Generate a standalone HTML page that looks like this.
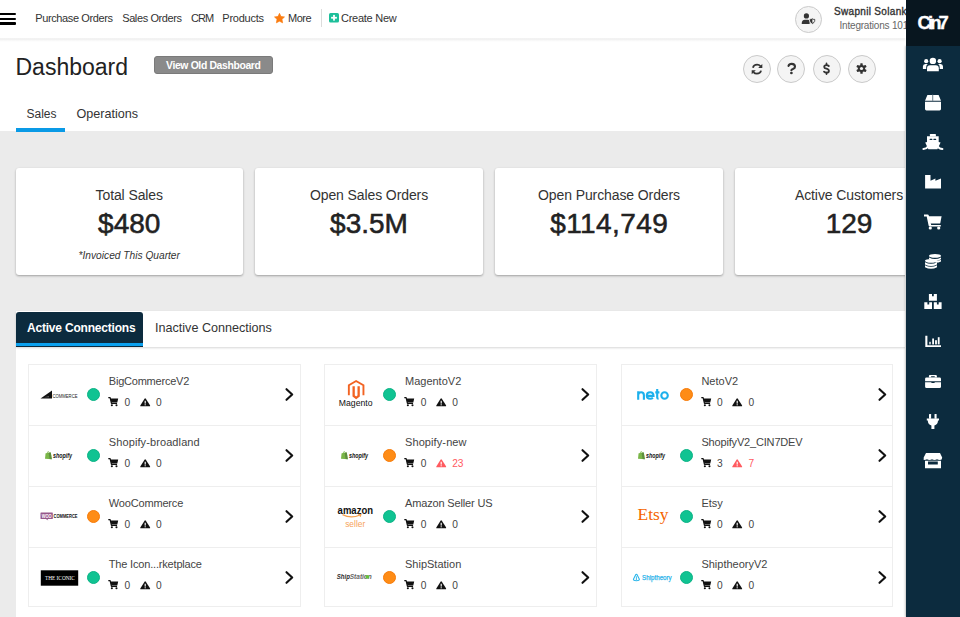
<!DOCTYPE html>
<html><head><meta charset="utf-8"><style>
*{box-sizing:border-box;margin:0;padding:0}
html,body{width:960px;height:617px;overflow:hidden;background:#ebebeb;font-family:"Liberation Sans",sans-serif;color:#333}
.a{position:absolute;white-space:nowrap;line-height:1}
svg{position:absolute;overflow:visible}
#top{position:absolute;left:0;top:0;width:906px;height:38px;background:#fff;box-shadow:0 1px 1px rgba(0,0,0,.07)}
#head{position:absolute;left:0;top:38px;width:906px;height:93px;background:#fff}
#side{position:absolute;left:906px;top:0;width:54px;height:617px;background:#0c2b3e}
#sidehd{position:absolute;left:0;top:0;width:54px;height:46px;background:#08161f}
.nav{font-size:11px;color:#333;top:13px}
.circ{position:absolute;width:28px;height:28px;border-radius:50%;background:#f4f4f4;border:1.4px solid #cacaca}
.card{position:absolute;top:168px;width:228px;height:107px;background:#fff;border-radius:3px;box-shadow:0 1px 3px rgba(0,0,0,.12),0 1px 2px rgba(0,0,0,.22)}
.ct{position:absolute;left:0;width:100%;text-align:center;line-height:1;white-space:nowrap}
.t1{top:19.8px;font-size:14px;color:#333;letter-spacing:-0.1px}
.t2{top:42px;font-size:28px;font-weight:400;color:#222;-webkit-text-stroke:0.55px #222}
.t3{top:83px;font-size:10.2px;font-style:italic;color:#333}
#panel{position:absolute;left:16px;top:311px;width:890px;height:306px;background:#fff}
#ptabs{position:absolute;left:0;top:0;width:890px;height:36px;background:#fff;box-shadow:0 1px 2px rgba(0,0,0,.16)}
.cc{position:absolute;width:272.8px;border:1px solid #eeeeee;background:#fff}
.nm{position:absolute;left:79.8px;top:11.3px;font-size:11px;color:#444;line-height:1;white-space:nowrap}
.cnt{position:absolute;top:32.6px;font-size:10.2px;color:#444;line-height:1}
.dot{position:absolute;left:58.3px;top:23.3px;width:13px;height:13px;border-radius:50%}
.g{background:#10c392;border:1px solid #0bb386}
.o{background:#fe8c16;border:1px solid #f77b08}
</style></head><body>
<div id="top">
  <div class="a" style="left:0;top:13.4px;width:16.4px;height:2.1px;background:#000;border-radius:0 1px 1px 0"></div>
  <div class="a" style="left:0;top:18.1px;width:16.4px;height:2.1px;background:#000;border-radius:0 1px 1px 0"></div>
  <div class="a" style="left:0;top:22.4px;width:16.4px;height:2.4px;background:#000;border-radius:0 1px 1px 0"></div>
  <div class="a nav" style="left:35.2px;letter-spacing:-0.38px">Purchase Orders</div>
  <div class="a nav" style="left:122.2px;letter-spacing:-0.39px">Sales Orders</div>
  <div class="a nav" style="left:191px;letter-spacing:-0.9px">CRM</div>
  <div class="a nav" style="left:222.3px;letter-spacing:-0.24px">Products</div>
  <svg style="left:274px;top:12.7px" width="11" height="10.5" viewBox="0 0 24 23"><path d="M12 0.8 L15.3 7.6 L22.9 8.6 L17.4 13.9 L18.8 21.5 L12 17.8 L5.2 21.5 L6.6 13.9 L1.1 8.6 L8.7 7.6 Z" fill="#fb7c10" stroke="#fb7c10" stroke-width="1.5" stroke-linejoin="round"/></svg>
  <div class="a nav" style="left:288px;letter-spacing:-0.5px">More</div>
  <div class="a" style="left:321px;top:9.2px;width:1px;height:18.2px;background:#dcdcdc"></div>
  <svg style="left:329px;top:13px" width="10" height="9.5" viewBox="0 0 10 9.5"><rect x="0" y="0" width="10" height="9.5" rx="1.6" fill="#1dbf9a"/><rect x="4.1" y="1.9" width="1.8" height="5.7" fill="#fff"/><rect x="2.1" y="3.85" width="5.8" height="1.8" fill="#fff"/></svg>
  <div class="a nav" style="left:341px;letter-spacing:-0.26px">Create New</div>
  <div class="a" style="left:795px;top:5.5px;width:27px;height:27px;border-radius:50%;background:#f4f4f4;border:1.4px solid #cacaca"></div>
  <svg style="left:801px;top:13px" width="16" height="12" viewBox="0 0 16 12">
    <circle cx="5.4" cy="2.9" r="2.6" fill="#333"/>
    <path d="M0.7 11 Q0.7 6.8 4 6.8 H6.8 Q8.4 6.8 8.6 7.6 V11 Z" fill="#333"/>
    <path d="M11.4 5.1 L14.6 6.2 Q14.6 9.8 11.4 11.2 Q8.2 9.8 8.2 6.2 Z" fill="#333" stroke="#f4f4f4" stroke-width="0.8"/>
    <path d="M11.4 6.3 L13.4 7 Q13.3 9.2 11.4 10.1 Z" fill="#f4f4f4"/>
  </svg>
  <div class="a" style="left:834px;top:6.5px;font-size:10px;font-weight:400;color:#333;-webkit-text-stroke:0.35px #333;letter-spacing:0.32px">Swapnil Solanki</div>
  <div class="a" style="left:839.5px;top:21.2px;font-size:10px;color:#666;letter-spacing:-0.2px">Integrations 101</div>
</div>
<div id="head">
  <div class="a" style="left:0;top:-0.5px;width:906px;height:4px;background:linear-gradient(to bottom, rgba(0,0,0,.045), rgba(0,0,0,.06) 30%, rgba(0,0,0,.02) 70%, rgba(0,0,0,0))"></div>
  <div class="a" style="left:15.5px;top:18.3px;font-size:23px;color:#222">Dashboard</div>
  <div class="a" style="left:154px;top:17.5px;width:119px;height:18.3px;background:#8a8a8a;border:1px solid #7a7a7a;border-radius:3px"></div>
  <div class="a" style="left:166px;top:22.5px;font-size:10.4px;font-weight:700;color:#fff;letter-spacing:-0.35px">View Old Dashboard</div>
  <div class="a" style="left:26.5px;top:69.9px;font-size:12px;color:#333">Sales</div>
  <div class="a" style="left:76.5px;top:69.9px;font-size:12.6px;color:#333">Operations</div>
  <div class="a" style="left:15.5px;top:90px;width:49.5px;height:3.5px;background:#0a9ae6"></div>
</div>
<div class="circ" style="left:742.5px;top:54.8px"></div>
<div class="circ" style="left:777px;top:54.8px"></div>
<div class="circ" style="left:812.5px;top:54.8px"></div>
<div class="circ" style="left:847.5px;top:54.8px"></div>
<svg style="left:750.5px;top:62.6px" width="12" height="12" viewBox="0 0 12 12">
  <path d="M1.9 4.7 Q2.7 1.6 6.1 1.6 Q8.2 1.6 9.6 3.2" fill="none" stroke="#333" stroke-width="1.7"/>
  <path d="M11.3 0.9 V5 H7.2 Z" fill="#333"/>
  <path d="M10.1 7.6 Q9.3 10.7 5.9 10.7 Q3.8 10.7 2.4 9.1" fill="none" stroke="#333" stroke-width="1.7"/>
  <path d="M0.7 11.3 V7.3 H4.8 Z" fill="#333"/>
</svg>
<svg style="left:786px;top:62px" width="12" height="14" viewBox="0 0 12 14"><path d="M2.5 3.9 Q3.2 1.9 5.6 1.9 Q9 1.9 9 4.7 Q9 6.2 6.9 7 Q5.4 7.5 5.4 8.2" fill="none" stroke="#333" stroke-width="2.1" stroke-linecap="round"/><circle cx="5.4" cy="11" r="1.35" fill="#333"/></svg>
<svg style="left:820px;top:62px" width="12" height="14" viewBox="0 0 12 14"><path d="M6.5 1.4 V3 M6.5 10.6 V12.1" stroke="#333" stroke-width="1.7" stroke-linecap="round"/><path d="M8.8 4 Q7.9 3.1 6.4 3.1 Q4.2 3.1 4.2 4.9 Q4.2 6.2 6.4 6.7 Q8.9 7.3 8.9 8.9 Q8.9 10.6 6.5 10.6 Q5 10.6 4 9.6" fill="none" stroke="#333" stroke-width="1.8" stroke-linecap="round"/></svg>
<svg style="left:856px;top:63.3px" width="11" height="11" viewBox="0 0 11 11">
  <g fill="#333"><circle cx="5.5" cy="5.5" r="3.6"/>
  <rect x="4.3" y="0.2" width="2.4" height="10.6" rx="0.6"/>
  <rect x="4.3" y="0.2" width="2.4" height="10.6" rx="0.6" transform="rotate(60 5.5 5.5)"/>
  <rect x="4.3" y="0.2" width="2.4" height="10.6" rx="0.6" transform="rotate(120 5.5 5.5)"/></g>
  <circle cx="5.5" cy="5.5" r="1.6" fill="#f4f4f4"/>
</svg>

<div class="card" style="left:15.5px;width:227.5px">
  <div class="ct t1">Total Sales</div>
  <div class="ct t2">$480</div>
  <div class="ct t3">*Invoiced This Quarter</div>
</div>
<div class="card" style="left:255px">
  <div class="ct t1">Open Sales Orders</div>
  <div class="ct t2">$3.5M</div>
</div>
<div class="card" style="left:495px">
  <div class="ct t1">Open Purchase Orders</div>
  <div class="ct t2" style="letter-spacing:0.4px;text-indent:0.4px">$114,749</div>
</div>
<div class="card" style="left:735px">
  <div class="ct t1">Active Customers</div>
  <div class="ct t2">129</div>
</div>

<div id="panel">
  <div id="ptabs">
    <div class="a" style="left:0;top:1px;width:127px;height:35px;background:#0c2b3e;border-radius:3px 3px 0 0"></div>
    <div class="a" style="left:0;top:32px;width:127px;height:3px;background:#0aa0ee"></div>
    <div class="a" style="left:11px;top:11px;font-size:12px;font-weight:700;color:#fff;letter-spacing:-0.2px">Active Connections</div>
    <div class="a" style="left:139px;top:11px;font-size:12.6px;color:#333">Inactive Connections</div>
  </div>
</div>
<div class="cc" style="left:28px;top:364px;height:62px"><div style="position:absolute;left:-1px;top:0"><svg style="left:12px;top:25px" width="40" height="10" viewBox="0 0 40 10"><path d="M0.5 8.6 L12 0.5 L12 8.6 Z" fill="#111"/><path d="M4 7.2 L9 7.2 L9 6.2 Z" fill="#777"/><text x="12.5" y="7.9" font-family="Liberation Sans" font-size="4.6" fill="#222" textLength="25" lengthAdjust="spacingAndGlyphs">COMMERCE</text></svg></div><div class="dot g"></div><div class="nm" style="letter-spacing:-0.22px">BigCommerceV2</div><svg style="left:79.3px;top:31.9px" width="10.6" height="9.7" viewBox="0 0 11 10"><path d="M0.3 0.6 H2.2 L3.6 6.6 H9.4" fill="none" stroke="#111" stroke-width="1.3" stroke-linejoin="round"/><path d="M2.6 1.6 H10.6 L9.6 5.6 H3.4 Z" fill="#111"/><circle cx="4" cy="8.6" r="1.1" fill="#111"/><circle cx="8.8" cy="8.6" r="1.1" fill="#111"/></svg><div class="cnt" style="left:95.5px">0</div><svg style="left:110.8px;top:32.6px" width="10.4" height="8.6" viewBox="0 0 11 10" preserveAspectRatio="none"><path d="M5.5 0.4 Q5.9 0.4 6.2 0.9 L10.7 8.6 Q11 9.6 10 9.6 H1 Q0 9.6 0.3 8.6 L4.8 0.9 Q5.1 0.4 5.5 0.4 Z" fill="#111"/><rect x="4.9" y="3.2" width="1.2" height="3.3" fill="#fff"/><rect x="4.9" y="7.3" width="1.2" height="1.2" fill="#fff"/></svg><div class="cnt" style="left:127px;color:#444">0</div><svg style="left:256px;top:23.2px" width="9" height="13" viewBox="0 0 9 13"><path d="M1.5 1.2 L7.2 6.5 L1.5 11.8" fill="none" stroke="#111" stroke-width="2.1" stroke-linecap="round" stroke-linejoin="round"/></svg></div>
<div class="cc" style="left:28px;top:425px;height:62px"><div style="position:absolute;left:-1px;top:0"><svg style="left:17px;top:25px" width="30" height="10" viewBox="0 0 30 10"><path d="M0.6 2.3 L5.8 1.6 L6.8 8.3 L0 7.7 Z" fill="#7ab648"/><path d="M3.6 1.8 L5.8 1.6 L6.8 8.3 L4.6 8.1 Z" fill="#5e8e3e"/><path d="M2.2 2.2 Q2.5 0.2 3.6 0.6 Q4.3 1 4.2 2" fill="none" stroke="#7ab648" stroke-width="0.7"/><text x="8" y="7" font-family="Liberation Sans" font-weight="700" font-style="italic" font-size="7" fill="#111" textLength="19" lengthAdjust="spacingAndGlyphs">shopify</text></svg></div><div class="dot g"></div><div class="nm" style="letter-spacing:0.1px">Shopify-broadland</div><svg style="left:79.3px;top:31.9px" width="10.6" height="9.7" viewBox="0 0 11 10"><path d="M0.3 0.6 H2.2 L3.6 6.6 H9.4" fill="none" stroke="#111" stroke-width="1.3" stroke-linejoin="round"/><path d="M2.6 1.6 H10.6 L9.6 5.6 H3.4 Z" fill="#111"/><circle cx="4" cy="8.6" r="1.1" fill="#111"/><circle cx="8.8" cy="8.6" r="1.1" fill="#111"/></svg><div class="cnt" style="left:95.5px">0</div><svg style="left:110.8px;top:32.6px" width="10.4" height="8.6" viewBox="0 0 11 10" preserveAspectRatio="none"><path d="M5.5 0.4 Q5.9 0.4 6.2 0.9 L10.7 8.6 Q11 9.6 10 9.6 H1 Q0 9.6 0.3 8.6 L4.8 0.9 Q5.1 0.4 5.5 0.4 Z" fill="#111"/><rect x="4.9" y="3.2" width="1.2" height="3.3" fill="#fff"/><rect x="4.9" y="7.3" width="1.2" height="1.2" fill="#fff"/></svg><div class="cnt" style="left:127px;color:#444">0</div><svg style="left:256px;top:23.2px" width="9" height="13" viewBox="0 0 9 13"><path d="M1.5 1.2 L7.2 6.5 L1.5 11.8" fill="none" stroke="#111" stroke-width="2.1" stroke-linecap="round" stroke-linejoin="round"/></svg></div>
<div class="cc" style="left:28px;top:486px;height:62px"><div style="position:absolute;left:-1px;top:0"><svg style="left:12px;top:25px" width="40" height="10" viewBox="0 0 40 10"><path d="M1 0.5 H12.3 Q12.8 0.5 12.8 1 V6.6 Q12.8 7.1 12.3 7.1 H7.5 L8.3 8.6 L5.8 7.1 H1 Q0.5 7.1 0.5 6.6 V1 Q0.5 0.5 1 0.5 Z" fill="#96588a"/><text x="1.7" y="5.9" font-family="Liberation Sans" font-weight="700" font-size="5.6" fill="#fff" textLength="10" lengthAdjust="spacingAndGlyphs">WOO</text><text x="13.5" y="6.3" font-family="Liberation Sans" font-weight="700" font-size="5" fill="#111" textLength="24" lengthAdjust="spacingAndGlyphs">COMMERCE</text></svg></div><div class="dot o"></div><div class="nm" style="letter-spacing:-0.17px">WooCommerce</div><svg style="left:79.3px;top:31.9px" width="10.6" height="9.7" viewBox="0 0 11 10"><path d="M0.3 0.6 H2.2 L3.6 6.6 H9.4" fill="none" stroke="#111" stroke-width="1.3" stroke-linejoin="round"/><path d="M2.6 1.6 H10.6 L9.6 5.6 H3.4 Z" fill="#111"/><circle cx="4" cy="8.6" r="1.1" fill="#111"/><circle cx="8.8" cy="8.6" r="1.1" fill="#111"/></svg><div class="cnt" style="left:95.5px">0</div><svg style="left:110.8px;top:32.6px" width="10.4" height="8.6" viewBox="0 0 11 10" preserveAspectRatio="none"><path d="M5.5 0.4 Q5.9 0.4 6.2 0.9 L10.7 8.6 Q11 9.6 10 9.6 H1 Q0 9.6 0.3 8.6 L4.8 0.9 Q5.1 0.4 5.5 0.4 Z" fill="#111"/><rect x="4.9" y="3.2" width="1.2" height="3.3" fill="#fff"/><rect x="4.9" y="7.3" width="1.2" height="1.2" fill="#fff"/></svg><div class="cnt" style="left:127px;color:#444">0</div><svg style="left:256px;top:23.2px" width="9" height="13" viewBox="0 0 9 13"><path d="M1.5 1.2 L7.2 6.5 L1.5 11.8" fill="none" stroke="#111" stroke-width="2.1" stroke-linecap="round" stroke-linejoin="round"/></svg></div>
<div class="cc" style="left:28px;top:547px;height:60px"><div style="position:absolute;left:-1px;top:0"><svg style="left:12px;top:22px" width="38" height="16" viewBox="0 0 38 16"><rect x="0.8" y="0.3" width="37.4" height="15.4" fill="#000"/><text x="4.9" y="10" font-family="Liberation Serif" font-size="5.4" fill="#fff" textLength="30" lengthAdjust="spacingAndGlyphs">THE ICONIC</text></svg></div><div class="dot g"></div><div class="nm" style="letter-spacing:-0.18px">The Icon...rketplace</div><svg style="left:79.3px;top:31.9px" width="10.6" height="9.7" viewBox="0 0 11 10"><path d="M0.3 0.6 H2.2 L3.6 6.6 H9.4" fill="none" stroke="#111" stroke-width="1.3" stroke-linejoin="round"/><path d="M2.6 1.6 H10.6 L9.6 5.6 H3.4 Z" fill="#111"/><circle cx="4" cy="8.6" r="1.1" fill="#111"/><circle cx="8.8" cy="8.6" r="1.1" fill="#111"/></svg><div class="cnt" style="left:95.5px">0</div><svg style="left:110.8px;top:32.6px" width="10.4" height="8.6" viewBox="0 0 11 10" preserveAspectRatio="none"><path d="M5.5 0.4 Q5.9 0.4 6.2 0.9 L10.7 8.6 Q11 9.6 10 9.6 H1 Q0 9.6 0.3 8.6 L4.8 0.9 Q5.1 0.4 5.5 0.4 Z" fill="#111"/><rect x="4.9" y="3.2" width="1.2" height="3.3" fill="#fff"/><rect x="4.9" y="7.3" width="1.2" height="1.2" fill="#fff"/></svg><div class="cnt" style="left:127px;color:#444">0</div><svg style="left:256px;top:23.2px" width="9" height="13" viewBox="0 0 9 13"><path d="M1.5 1.2 L7.2 6.5 L1.5 11.8" fill="none" stroke="#111" stroke-width="2.1" stroke-linecap="round" stroke-linejoin="round"/></svg></div>
<div class="cc" style="left:324.2px;top:364px;height:62px"><div style="position:absolute;left:-1px;top:0"><svg style="left:14px;top:14px" width="36" height="30" viewBox="0 0 36 30"><path d="M10.85 16.3 V6.2 L18.1 2 L25.45 6.2 V16.3" fill="none" stroke="#f26322" stroke-width="1.9"/><path d="M15.65 7.3 V17 L18.15 18.9 L20.65 17 V7.3" fill="none" stroke="#f26322" stroke-width="2.3"/><text x="0.8" y="27" font-family="Liberation Sans" font-size="9.3" fill="#111" textLength="33.7" lengthAdjust="spacingAndGlyphs">Magento</text></svg></div><div class="dot g"></div><div class="nm" style="letter-spacing:0px">MagentoV2</div><svg style="left:79.3px;top:31.9px" width="10.6" height="9.7" viewBox="0 0 11 10"><path d="M0.3 0.6 H2.2 L3.6 6.6 H9.4" fill="none" stroke="#111" stroke-width="1.3" stroke-linejoin="round"/><path d="M2.6 1.6 H10.6 L9.6 5.6 H3.4 Z" fill="#111"/><circle cx="4" cy="8.6" r="1.1" fill="#111"/><circle cx="8.8" cy="8.6" r="1.1" fill="#111"/></svg><div class="cnt" style="left:95.5px">0</div><svg style="left:110.8px;top:32.6px" width="10.4" height="8.6" viewBox="0 0 11 10" preserveAspectRatio="none"><path d="M5.5 0.4 Q5.9 0.4 6.2 0.9 L10.7 8.6 Q11 9.6 10 9.6 H1 Q0 9.6 0.3 8.6 L4.8 0.9 Q5.1 0.4 5.5 0.4 Z" fill="#111"/><rect x="4.9" y="3.2" width="1.2" height="3.3" fill="#fff"/><rect x="4.9" y="7.3" width="1.2" height="1.2" fill="#fff"/></svg><div class="cnt" style="left:127px;color:#444">0</div><svg style="left:256px;top:23.2px" width="9" height="13" viewBox="0 0 9 13"><path d="M1.5 1.2 L7.2 6.5 L1.5 11.8" fill="none" stroke="#111" stroke-width="2.1" stroke-linecap="round" stroke-linejoin="round"/></svg></div>
<div class="cc" style="left:324.2px;top:425px;height:62px"><div style="position:absolute;left:-1px;top:0"><svg style="left:17px;top:25px" width="30" height="10" viewBox="0 0 30 10"><path d="M0.6 2.3 L5.8 1.6 L6.8 8.3 L0 7.7 Z" fill="#7ab648"/><path d="M3.6 1.8 L5.8 1.6 L6.8 8.3 L4.6 8.1 Z" fill="#5e8e3e"/><path d="M2.2 2.2 Q2.5 0.2 3.6 0.6 Q4.3 1 4.2 2" fill="none" stroke="#7ab648" stroke-width="0.7"/><text x="8" y="7" font-family="Liberation Sans" font-weight="700" font-style="italic" font-size="7" fill="#111" textLength="19" lengthAdjust="spacingAndGlyphs">shopify</text></svg></div><div class="dot o"></div><div class="nm" style="letter-spacing:0.1px">Shopify-new</div><svg style="left:79.3px;top:31.9px" width="10.6" height="9.7" viewBox="0 0 11 10"><path d="M0.3 0.6 H2.2 L3.6 6.6 H9.4" fill="none" stroke="#111" stroke-width="1.3" stroke-linejoin="round"/><path d="M2.6 1.6 H10.6 L9.6 5.6 H3.4 Z" fill="#111"/><circle cx="4" cy="8.6" r="1.1" fill="#111"/><circle cx="8.8" cy="8.6" r="1.1" fill="#111"/></svg><div class="cnt" style="left:95.5px">0</div><svg style="left:110.8px;top:32.6px" width="10.4" height="8.6" viewBox="0 0 11 10" preserveAspectRatio="none"><path d="M5.5 0.4 Q5.9 0.4 6.2 0.9 L10.7 8.6 Q11 9.6 10 9.6 H1 Q0 9.6 0.3 8.6 L4.8 0.9 Q5.1 0.4 5.5 0.4 Z" fill="#ff5a5f"/><rect x="4.9" y="3.2" width="1.2" height="3.3" fill="#fff"/><rect x="4.9" y="7.3" width="1.2" height="1.2" fill="#fff"/></svg><div class="cnt" style="left:127px;color:#ff5a5f">23</div><svg style="left:256px;top:23.2px" width="9" height="13" viewBox="0 0 9 13"><path d="M1.5 1.2 L7.2 6.5 L1.5 11.8" fill="none" stroke="#111" stroke-width="2.1" stroke-linecap="round" stroke-linejoin="round"/></svg></div>
<div class="cc" style="left:324.2px;top:486px;height:62px"><div style="position:absolute;left:-1px;top:0"><svg style="left:13px;top:17px" width="38" height="28" viewBox="0 0 38 28"><text x="0.6" y="9.5" font-family="Liberation Sans" font-weight="700" font-size="11" fill="#111" textLength="35.5" lengthAdjust="spacingAndGlyphs">amazon</text><path d="M5.5 10.6 Q14 15 23 11" fill="none" stroke="#f6a04d" stroke-width="1.3"/><path d="M21.3 10.4 L23.9 10.6 L23.2 12.8" fill="none" stroke="#f6a04d" stroke-width="1.1"/><text x="8.2" y="22.8" font-family="Liberation Sans" font-size="8.2" fill="#f6a35a" textLength="20" lengthAdjust="spacingAndGlyphs">seller</text></svg></div><div class="dot g"></div><div class="nm" style="letter-spacing:-0.15px">Amazon Seller US</div><svg style="left:79.3px;top:31.9px" width="10.6" height="9.7" viewBox="0 0 11 10"><path d="M0.3 0.6 H2.2 L3.6 6.6 H9.4" fill="none" stroke="#111" stroke-width="1.3" stroke-linejoin="round"/><path d="M2.6 1.6 H10.6 L9.6 5.6 H3.4 Z" fill="#111"/><circle cx="4" cy="8.6" r="1.1" fill="#111"/><circle cx="8.8" cy="8.6" r="1.1" fill="#111"/></svg><div class="cnt" style="left:95.5px">0</div><svg style="left:110.8px;top:32.6px" width="10.4" height="8.6" viewBox="0 0 11 10" preserveAspectRatio="none"><path d="M5.5 0.4 Q5.9 0.4 6.2 0.9 L10.7 8.6 Q11 9.6 10 9.6 H1 Q0 9.6 0.3 8.6 L4.8 0.9 Q5.1 0.4 5.5 0.4 Z" fill="#111"/><rect x="4.9" y="3.2" width="1.2" height="3.3" fill="#fff"/><rect x="4.9" y="7.3" width="1.2" height="1.2" fill="#fff"/></svg><div class="cnt" style="left:127px;color:#444">0</div><svg style="left:256px;top:23.2px" width="9" height="13" viewBox="0 0 9 13"><path d="M1.5 1.2 L7.2 6.5 L1.5 11.8" fill="none" stroke="#111" stroke-width="2.1" stroke-linecap="round" stroke-linejoin="round"/></svg></div>
<div class="cc" style="left:324.2px;top:547px;height:60px"><div style="position:absolute;left:-1px;top:0"><svg style="left:12px;top:25px" width="40" height="10" viewBox="0 0 40 10"><text x="0.8" y="5.7" font-family="Liberation Sans" font-weight="700" font-style="italic" font-size="6.8" fill="#2a2a2a" textLength="13" lengthAdjust="spacingAndGlyphs">Ship</text><text x="13.8" y="5.7" font-family="Liberation Sans" font-weight="700" font-style="italic" font-size="6.8" fill="#666" textLength="22" lengthAdjust="spacingAndGlyphs">Station</text><circle cx="31.3" cy="3.8" r="1.9" fill="#67c23a"/></svg></div><div class="dot o"></div><div class="nm" style="letter-spacing:0px">ShipStation</div><svg style="left:79.3px;top:31.9px" width="10.6" height="9.7" viewBox="0 0 11 10"><path d="M0.3 0.6 H2.2 L3.6 6.6 H9.4" fill="none" stroke="#111" stroke-width="1.3" stroke-linejoin="round"/><path d="M2.6 1.6 H10.6 L9.6 5.6 H3.4 Z" fill="#111"/><circle cx="4" cy="8.6" r="1.1" fill="#111"/><circle cx="8.8" cy="8.6" r="1.1" fill="#111"/></svg><div class="cnt" style="left:95.5px">0</div><svg style="left:110.8px;top:32.6px" width="10.4" height="8.6" viewBox="0 0 11 10" preserveAspectRatio="none"><path d="M5.5 0.4 Q5.9 0.4 6.2 0.9 L10.7 8.6 Q11 9.6 10 9.6 H1 Q0 9.6 0.3 8.6 L4.8 0.9 Q5.1 0.4 5.5 0.4 Z" fill="#111"/><rect x="4.9" y="3.2" width="1.2" height="3.3" fill="#fff"/><rect x="4.9" y="7.3" width="1.2" height="1.2" fill="#fff"/></svg><div class="cnt" style="left:127px;color:#444">0</div><svg style="left:256px;top:23.2px" width="9" height="13" viewBox="0 0 9 13"><path d="M1.5 1.2 L7.2 6.5 L1.5 11.8" fill="none" stroke="#111" stroke-width="2.1" stroke-linecap="round" stroke-linejoin="round"/></svg></div>
<div class="cc" style="left:620.6px;top:364px;height:62px"><div style="position:absolute;left:-1px;top:0"><svg style="left:0.2px;top:-1px" width="60" height="61" viewBox="0 0 60 61"><g fill="none" stroke="#1cb0ec" stroke-width="2.1" stroke-linecap="butt"><path d="M17.2 27.2 V35.8 M17.2 31.2 Q17.2 28.3 20.1 28.3 Q22.9 28.3 22.9 31.2 V35.8"/><path d="M25.9 31.9 H32.5 Q32.5 28.2 29.2 28.2 Q25.8 28.2 25.8 31.5 Q25.8 34.8 29.2 34.8 Q30.9 34.8 31.9 33.8"/><path d="M36.2 25 V33.6 Q36.2 34.8 37.6 34.8 M34.3 28.4 H38.4"/><circle cx="43.55" cy="31.5" r="3.25"/></g></svg></div><div class="dot o"></div><div class="nm" style="letter-spacing:0px">NetoV2</div><svg style="left:79.3px;top:31.9px" width="10.6" height="9.7" viewBox="0 0 11 10"><path d="M0.3 0.6 H2.2 L3.6 6.6 H9.4" fill="none" stroke="#111" stroke-width="1.3" stroke-linejoin="round"/><path d="M2.6 1.6 H10.6 L9.6 5.6 H3.4 Z" fill="#111"/><circle cx="4" cy="8.6" r="1.1" fill="#111"/><circle cx="8.8" cy="8.6" r="1.1" fill="#111"/></svg><div class="cnt" style="left:95.5px">0</div><svg style="left:110.8px;top:32.6px" width="10.4" height="8.6" viewBox="0 0 11 10" preserveAspectRatio="none"><path d="M5.5 0.4 Q5.9 0.4 6.2 0.9 L10.7 8.6 Q11 9.6 10 9.6 H1 Q0 9.6 0.3 8.6 L4.8 0.9 Q5.1 0.4 5.5 0.4 Z" fill="#111"/><rect x="4.9" y="3.2" width="1.2" height="3.3" fill="#fff"/><rect x="4.9" y="7.3" width="1.2" height="1.2" fill="#fff"/></svg><div class="cnt" style="left:127px;color:#444">0</div><svg style="left:256px;top:23.2px" width="9" height="13" viewBox="0 0 9 13"><path d="M1.5 1.2 L7.2 6.5 L1.5 11.8" fill="none" stroke="#111" stroke-width="2.1" stroke-linecap="round" stroke-linejoin="round"/></svg></div>
<div class="cc" style="left:620.6px;top:425px;height:62px"><div style="position:absolute;left:-1px;top:0"><svg style="left:17px;top:25px" width="30" height="10" viewBox="0 0 30 10"><path d="M0.6 2.3 L5.8 1.6 L6.8 8.3 L0 7.7 Z" fill="#7ab648"/><path d="M3.6 1.8 L5.8 1.6 L6.8 8.3 L4.6 8.1 Z" fill="#5e8e3e"/><path d="M2.2 2.2 Q2.5 0.2 3.6 0.6 Q4.3 1 4.2 2" fill="none" stroke="#7ab648" stroke-width="0.7"/><text x="8" y="7" font-family="Liberation Sans" font-weight="700" font-style="italic" font-size="7" fill="#111" textLength="19" lengthAdjust="spacingAndGlyphs">shopify</text></svg></div><div class="dot g"></div><div class="nm" style="letter-spacing:-0.17px">ShopifyV2_CIN7DEV</div><svg style="left:79.3px;top:31.9px" width="10.6" height="9.7" viewBox="0 0 11 10"><path d="M0.3 0.6 H2.2 L3.6 6.6 H9.4" fill="none" stroke="#111" stroke-width="1.3" stroke-linejoin="round"/><path d="M2.6 1.6 H10.6 L9.6 5.6 H3.4 Z" fill="#111"/><circle cx="4" cy="8.6" r="1.1" fill="#111"/><circle cx="8.8" cy="8.6" r="1.1" fill="#111"/></svg><div class="cnt" style="left:95.5px">3</div><svg style="left:110.8px;top:32.6px" width="10.4" height="8.6" viewBox="0 0 11 10" preserveAspectRatio="none"><path d="M5.5 0.4 Q5.9 0.4 6.2 0.9 L10.7 8.6 Q11 9.6 10 9.6 H1 Q0 9.6 0.3 8.6 L4.8 0.9 Q5.1 0.4 5.5 0.4 Z" fill="#ff5a5f"/><rect x="4.9" y="3.2" width="1.2" height="3.3" fill="#fff"/><rect x="4.9" y="7.3" width="1.2" height="1.2" fill="#fff"/></svg><div class="cnt" style="left:127px;color:#ff5a5f">7</div><svg style="left:256px;top:23.2px" width="9" height="13" viewBox="0 0 9 13"><path d="M1.5 1.2 L7.2 6.5 L1.5 11.8" fill="none" stroke="#111" stroke-width="2.1" stroke-linecap="round" stroke-linejoin="round"/></svg></div>
<div class="cc" style="left:620.6px;top:486px;height:62px"><div style="position:absolute;left:-1px;top:0"><svg style="left:16px;top:18px" width="36" height="22" viewBox="0 0 36 22"><text x="0.5" y="15.3" font-family="Liberation Serif" font-size="17.5" fill="#f56400" textLength="31" lengthAdjust="spacingAndGlyphs">Etsy</text></svg></div><div class="dot g"></div><div class="nm" style="letter-spacing:0px">Etsy</div><svg style="left:79.3px;top:31.9px" width="10.6" height="9.7" viewBox="0 0 11 10"><path d="M0.3 0.6 H2.2 L3.6 6.6 H9.4" fill="none" stroke="#111" stroke-width="1.3" stroke-linejoin="round"/><path d="M2.6 1.6 H10.6 L9.6 5.6 H3.4 Z" fill="#111"/><circle cx="4" cy="8.6" r="1.1" fill="#111"/><circle cx="8.8" cy="8.6" r="1.1" fill="#111"/></svg><div class="cnt" style="left:95.5px">0</div><svg style="left:110.8px;top:32.6px" width="10.4" height="8.6" viewBox="0 0 11 10" preserveAspectRatio="none"><path d="M5.5 0.4 Q5.9 0.4 6.2 0.9 L10.7 8.6 Q11 9.6 10 9.6 H1 Q0 9.6 0.3 8.6 L4.8 0.9 Q5.1 0.4 5.5 0.4 Z" fill="#111"/><rect x="4.9" y="3.2" width="1.2" height="3.3" fill="#fff"/><rect x="4.9" y="7.3" width="1.2" height="1.2" fill="#fff"/></svg><div class="cnt" style="left:127px;color:#444">0</div><svg style="left:256px;top:23.2px" width="9" height="13" viewBox="0 0 9 13"><path d="M1.5 1.2 L7.2 6.5 L1.5 11.8" fill="none" stroke="#111" stroke-width="2.1" stroke-linecap="round" stroke-linejoin="round"/></svg></div>
<div class="cc" style="left:620.6px;top:547px;height:60px"><div style="position:absolute;left:-1px;top:0"><svg style="left:11px;top:24px" width="40" height="12" viewBox="0 0 40 12"><path d="M4.4 2.2 Q4.9 2.2 5.1 2.8 L7.4 7.3 Q7.4 8.7 4.4 8.7 Q1.4 8.7 1.4 7.3 L3.7 2.8 Q3.9 2.2 4.4 2.2 Z" fill="none" stroke="#29b5ea" stroke-width="1.1"/><path d="M4.4 4.3 V8" stroke="#29b5ea" stroke-width="0.9"/><text x="10.1" y="8" font-family="Liberation Sans" font-weight="400" font-size="7.4" fill="#25b2ea" stroke="#25b2ea" stroke-width="0.25" textLength="29.6" lengthAdjust="spacingAndGlyphs">Shiptheory</text></svg></div><div class="dot g"></div><div class="nm" style="letter-spacing:0px">ShiptheoryV2</div><svg style="left:79.3px;top:31.9px" width="10.6" height="9.7" viewBox="0 0 11 10"><path d="M0.3 0.6 H2.2 L3.6 6.6 H9.4" fill="none" stroke="#111" stroke-width="1.3" stroke-linejoin="round"/><path d="M2.6 1.6 H10.6 L9.6 5.6 H3.4 Z" fill="#111"/><circle cx="4" cy="8.6" r="1.1" fill="#111"/><circle cx="8.8" cy="8.6" r="1.1" fill="#111"/></svg><div class="cnt" style="left:95.5px">0</div><svg style="left:110.8px;top:32.6px" width="10.4" height="8.6" viewBox="0 0 11 10" preserveAspectRatio="none"><path d="M5.5 0.4 Q5.9 0.4 6.2 0.9 L10.7 8.6 Q11 9.6 10 9.6 H1 Q0 9.6 0.3 8.6 L4.8 0.9 Q5.1 0.4 5.5 0.4 Z" fill="#111"/><rect x="4.9" y="3.2" width="1.2" height="3.3" fill="#fff"/><rect x="4.9" y="7.3" width="1.2" height="1.2" fill="#fff"/></svg><div class="cnt" style="left:127px;color:#444">0</div><svg style="left:256px;top:23.2px" width="9" height="13" viewBox="0 0 9 13"><path d="M1.5 1.2 L7.2 6.5 L1.5 11.8" fill="none" stroke="#111" stroke-width="2.1" stroke-linecap="round" stroke-linejoin="round"/></svg></div>
<div class="a" style="left:904.6px;top:38px;width:1.4px;height:579px;background:#fafafa"></div>
<div class="a" style="left:906px;top:46px;width:1px;height:571px;box-shadow:-1px 0 2px rgba(0,0,0,.3)"></div>
<div id="side"><div id="sidehd"></div>
<div class="a" style="left:11.6px;top:13.6px;font-size:18.4px;font-weight:700;color:#fff;letter-spacing:-2.9px;-webkit-text-stroke:0.35px #fff">Cin7</div>
<svg style="left:0;top:0" width="54" height="617" viewBox="0 0 54 617">
 <g fill="#fff">
  <!-- users -->
  <circle cx="26.9" cy="60.9" r="3.2"/>
  <path d="M21 71.2 V68.3 Q21 65.3 24 65.3 H29.8 Q32.8 65.3 32.8 68.3 V71.2 Z"/>
  <circle cx="20.2" cy="61.2" r="2.1"/>
  <path d="M16.9 68.9 V66.5 Q16.9 64 19.3 64 H21.8 Q20.2 65.2 20.2 67 V68.9 Z"/>
  <circle cx="33.6" cy="61.2" r="2.1"/>
  <path d="M37 68.9 V66.5 Q37 64 34.6 64 H32.1 Q33.7 65.2 33.7 67 V68.9 Z"/>
  <!-- box -->
  <path d="M21.4 94.9 H32.6 L35 100.7 H19 Z"/>
  <path d="M19 101.8 H35 V109 Q35 110.4 33.6 110.4 H20.4 Q19 110.4 19 109 Z"/>
  <rect x="26.3" y="94.5" width="0.9" height="6.4" fill="#5a6f7c"/>
  <!-- ship -->
  <rect x="23.9" y="133.9" width="6" height="2.5" rx="0.5"/>
  <path d="M21 136.2 H32.7 V142 L34.6 142.6 L31.4 149.3 H22.4 L19.2 142.6 L21 142 Z"/>
  <rect x="23.6" y="138.7" width="2.8" height="1.2" rx="0.5" fill="#0c2b3e"/><rect x="27.4" y="138.7" width="2.8" height="1.2" rx="0.5" fill="#0c2b3e"/>
  <path d="M17.4 149 Q20.4 149 22.2 146.4" fill="none" stroke="#fff" stroke-width="2" stroke-linecap="round"/>
  <path d="M36.4 149 Q33.4 149 31.6 146.4" fill="none" stroke="#fff" stroke-width="2" stroke-linecap="round"/>
  <!-- industry -->
  <path d="M19.1 175.1 H24.5 V180.7 L29.4 178.6 V180.7 L35 178.6 V188.5 H19.1 Z"/>
  <!-- cart -->
  <path d="M18 214.6 H21.6 Q22.6 214.6 22.8 215.6 L25.2 224.9 H34.8 V226.5 H23.8 Q22.8 226.5 22.6 225.5 L20.7 216.5 H18 Z"/>
  <path d="M22.3 216.2 H35.6 L34.2 223.6 H24.3 Z"/>
  <circle cx="24.3" cy="228" r="1.6"/><circle cx="32.7" cy="228" r="1.6"/>
  <!-- coins -->
  <ellipse cx="29" cy="255.9" rx="6" ry="1.9"/>
  <path d="M23 257.4 Q29 260.6 35 257.4 V259.3 Q29 262.3 23 259.3 Z"/>
  <path d="M29.5 260.6 Q32.8 260.6 35 259.9 V261.5 Q32.8 262.8 29.5 262.8 Z"/>
  <ellipse cx="25" cy="260.8" rx="6" ry="1.9"/>
  <path d="M19 262.3 Q25 265.3 31 262.3 V264.4 Q25 267.4 19 264.4 Z"/>
  <path d="M19 265.2 Q25 268.2 31 265.2 V267.3 Q25 270.3 19 267.3 Z"/>
  <!-- pallet boxes -->
  <path d="M22.9 294 H26 V296.2 H27.8 V294 H30.9 V300.7 H22.9 Z"/>
  <path d="M18.3 302.2 H21.4 V304.4 H23.2 V302.2 H26 V309 H18.3 Z"/>
  <path d="M27.8 302.2 H30.9 V304.4 H32.7 V302.2 H35.6 V309 H27.8 Z"/>
  <!-- chart -->
  <path d="M19.3 335.8 H21.4 V345.2 H35 V347 H19.3 Z"/>
  <rect x="23.3" y="341.8" width="1.4" height="2.6"/>
  <rect x="26.2" y="338.5" width="1.8" height="5.9"/>
  <rect x="29.1" y="340.2" width="1.8" height="4.2"/>
  <rect x="31.8" y="337.2" width="1.8" height="7.2"/>
  <!-- toolbox -->
  <path d="M23.9 374.9 H29.9 Q30.9 374.9 30.9 375.9 V377.6 H22.9 V375.9 Q22.9 374.9 23.9 374.9 Z"/>
  <rect x="24.9" y="376.2" width="4" height="1.2" rx="0.6" fill="#0c2b3e"/>
  <path d="M19.1 378.8 Q19.1 377.4 20.5 377.4 H33.6 Q35 377.4 35 378.8 V381.3 H19.1 Z"/>
  <path d="M19.1 382.2 H25.4 V382.9 H28.6 V382.2 H35 V386.7 Q35 388.1 33.6 388.1 H20.5 Q19.1 388.1 19.1 386.7 Z"/>
  <!-- plug -->
  <rect x="23" y="413.9" width="2.1" height="4.8" rx="0.5"/>
  <rect x="28.5" y="413.9" width="2.1" height="4.8" rx="0.5"/>
  <path d="M20.8 418.6 H33 V420.6 H32 Q32 424.5 28.4 425.6 V429 H25.4 V425.6 Q21.8 424.5 21.8 420.6 H20.8 Z"/>
  <!-- store -->
  <path d="M20 452.9 H34 L36.2 457.4 Q36.2 460 34 460 Q32 460 31 459.3 Q30 460 28.5 460 Q27 460 26 459.3 Q25 460 23.5 460 Q22 460 21 459.3 Q20 460 17.7 460 L17.7 457.4 Z"/>
  <path d="M19 460.8 H35 V468.2 H19 Z M22 461.6 V464.6 H31.8 V461.6 Z" fill-rule="evenodd"/>
 </g>
</svg>
</div>

</body></html>
